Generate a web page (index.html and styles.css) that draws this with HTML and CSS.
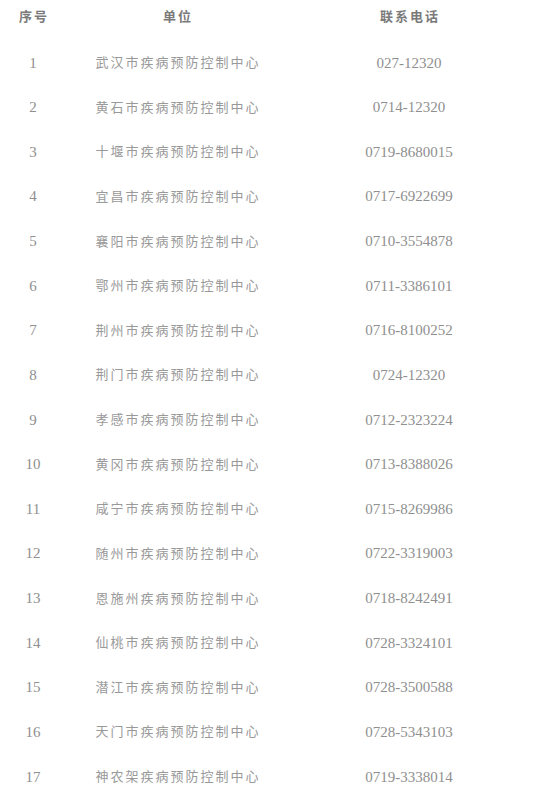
FILE: index.html
```html
<!DOCTYPE html>
<html lang="zh-CN">
<head>
<meta charset="utf-8">
<title>疾病预防控制中心联系电话</title>
<link rel="stylesheet" href="styles.css">
</head>
<body>
<div class="table">
  <div class="row head">
    <div class="c1">序号</div>
    <div class="c2">单位</div>
    <div class="c3">联系电话</div>
  </div>
  <div class="row"><div class="c1 num">1</div><div class="c2">武汉市疾病预防控制中心</div><div class="c3 num">027-12320</div></div>
  <div class="row"><div class="c1 num">2</div><div class="c2">黄石市疾病预防控制中心</div><div class="c3 num">0714-12320</div></div>
  <div class="row"><div class="c1 num">3</div><div class="c2">十堰市疾病预防控制中心</div><div class="c3 num">0719-8680015</div></div>
  <div class="row"><div class="c1 num">4</div><div class="c2">宜昌市疾病预防控制中心</div><div class="c3 num">0717-6922699</div></div>
  <div class="row"><div class="c1 num">5</div><div class="c2">襄阳市疾病预防控制中心</div><div class="c3 num">0710-3554878</div></div>
  <div class="row"><div class="c1 num">6</div><div class="c2">鄂州市疾病预防控制中心</div><div class="c3 num">0711-3386101</div></div>
  <div class="row"><div class="c1 num">7</div><div class="c2">荆州市疾病预防控制中心</div><div class="c3 num">0716-8100252</div></div>
  <div class="row"><div class="c1 num">8</div><div class="c2">荆门市疾病预防控制中心</div><div class="c3 num">0724-12320</div></div>
  <div class="row"><div class="c1 num">9</div><div class="c2">孝感市疾病预防控制中心</div><div class="c3 num">0712-2323224</div></div>
  <div class="row"><div class="c1 num">10</div><div class="c2">黄冈市疾病预防控制中心</div><div class="c3 num">0713-8388026</div></div>
  <div class="row"><div class="c1 num">11</div><div class="c2">咸宁市疾病预防控制中心</div><div class="c3 num">0715-8269986</div></div>
  <div class="row"><div class="c1 num">12</div><div class="c2">随州市疾病预防控制中心</div><div class="c3 num">0722-3319003</div></div>
  <div class="row"><div class="c1 num">13</div><div class="c2">恩施州疾病预防控制中心</div><div class="c3 num">0718-8242491</div></div>
  <div class="row"><div class="c1 num">14</div><div class="c2">仙桃市疾病预防控制中心</div><div class="c3 num">0728-3324101</div></div>
  <div class="row"><div class="c1 num">15</div><div class="c2">潜江市疾病预防控制中心</div><div class="c3 num">0728-3500588</div></div>
  <div class="row"><div class="c1 num">16</div><div class="c2">天门市疾病预防控制中心</div><div class="c3 num">0728-5343103</div></div>
  <div class="row"><div class="c1 num">17</div><div class="c2">神农架疾病预防控制中心</div><div class="c3 num">0719-3338014</div></div>
</div>
</body>
</html>
```

FILE: styles.css
```css
html, body {
  margin: 0;
  padding: 0;
  background: #ffffff;
}
body {
  font-family: "Noto Sans CJK SC", "Noto Sans", sans-serif;
  color: #999999;
  font-size: 13px;
}
.table {
  display: flex;
  flex-direction: column;
  width: 550px;
}
.row {
  display: grid;
  grid-template-columns: 66px 222px 242px;
  height: 44.625px;
  align-items: center;
  text-align: center;
  letter-spacing: 2px;
  line-height: 18px;
}
.row > div {
  padding-left: 2px;
}
.head {
  height: 39.7px;
  align-items: start;
  padding-top: 7px;
  box-sizing: border-box;
  font-weight: bold;
  color: #7a7a7a;
}
.num {
  font-family: "Liberation Serif", serif;
  font-size: 15px;
  letter-spacing: 0;
  color: #8f8f8f;
  padding-top: 1px;
}
.c1.num, .c3.num {
  padding-left: 0;
}
```
